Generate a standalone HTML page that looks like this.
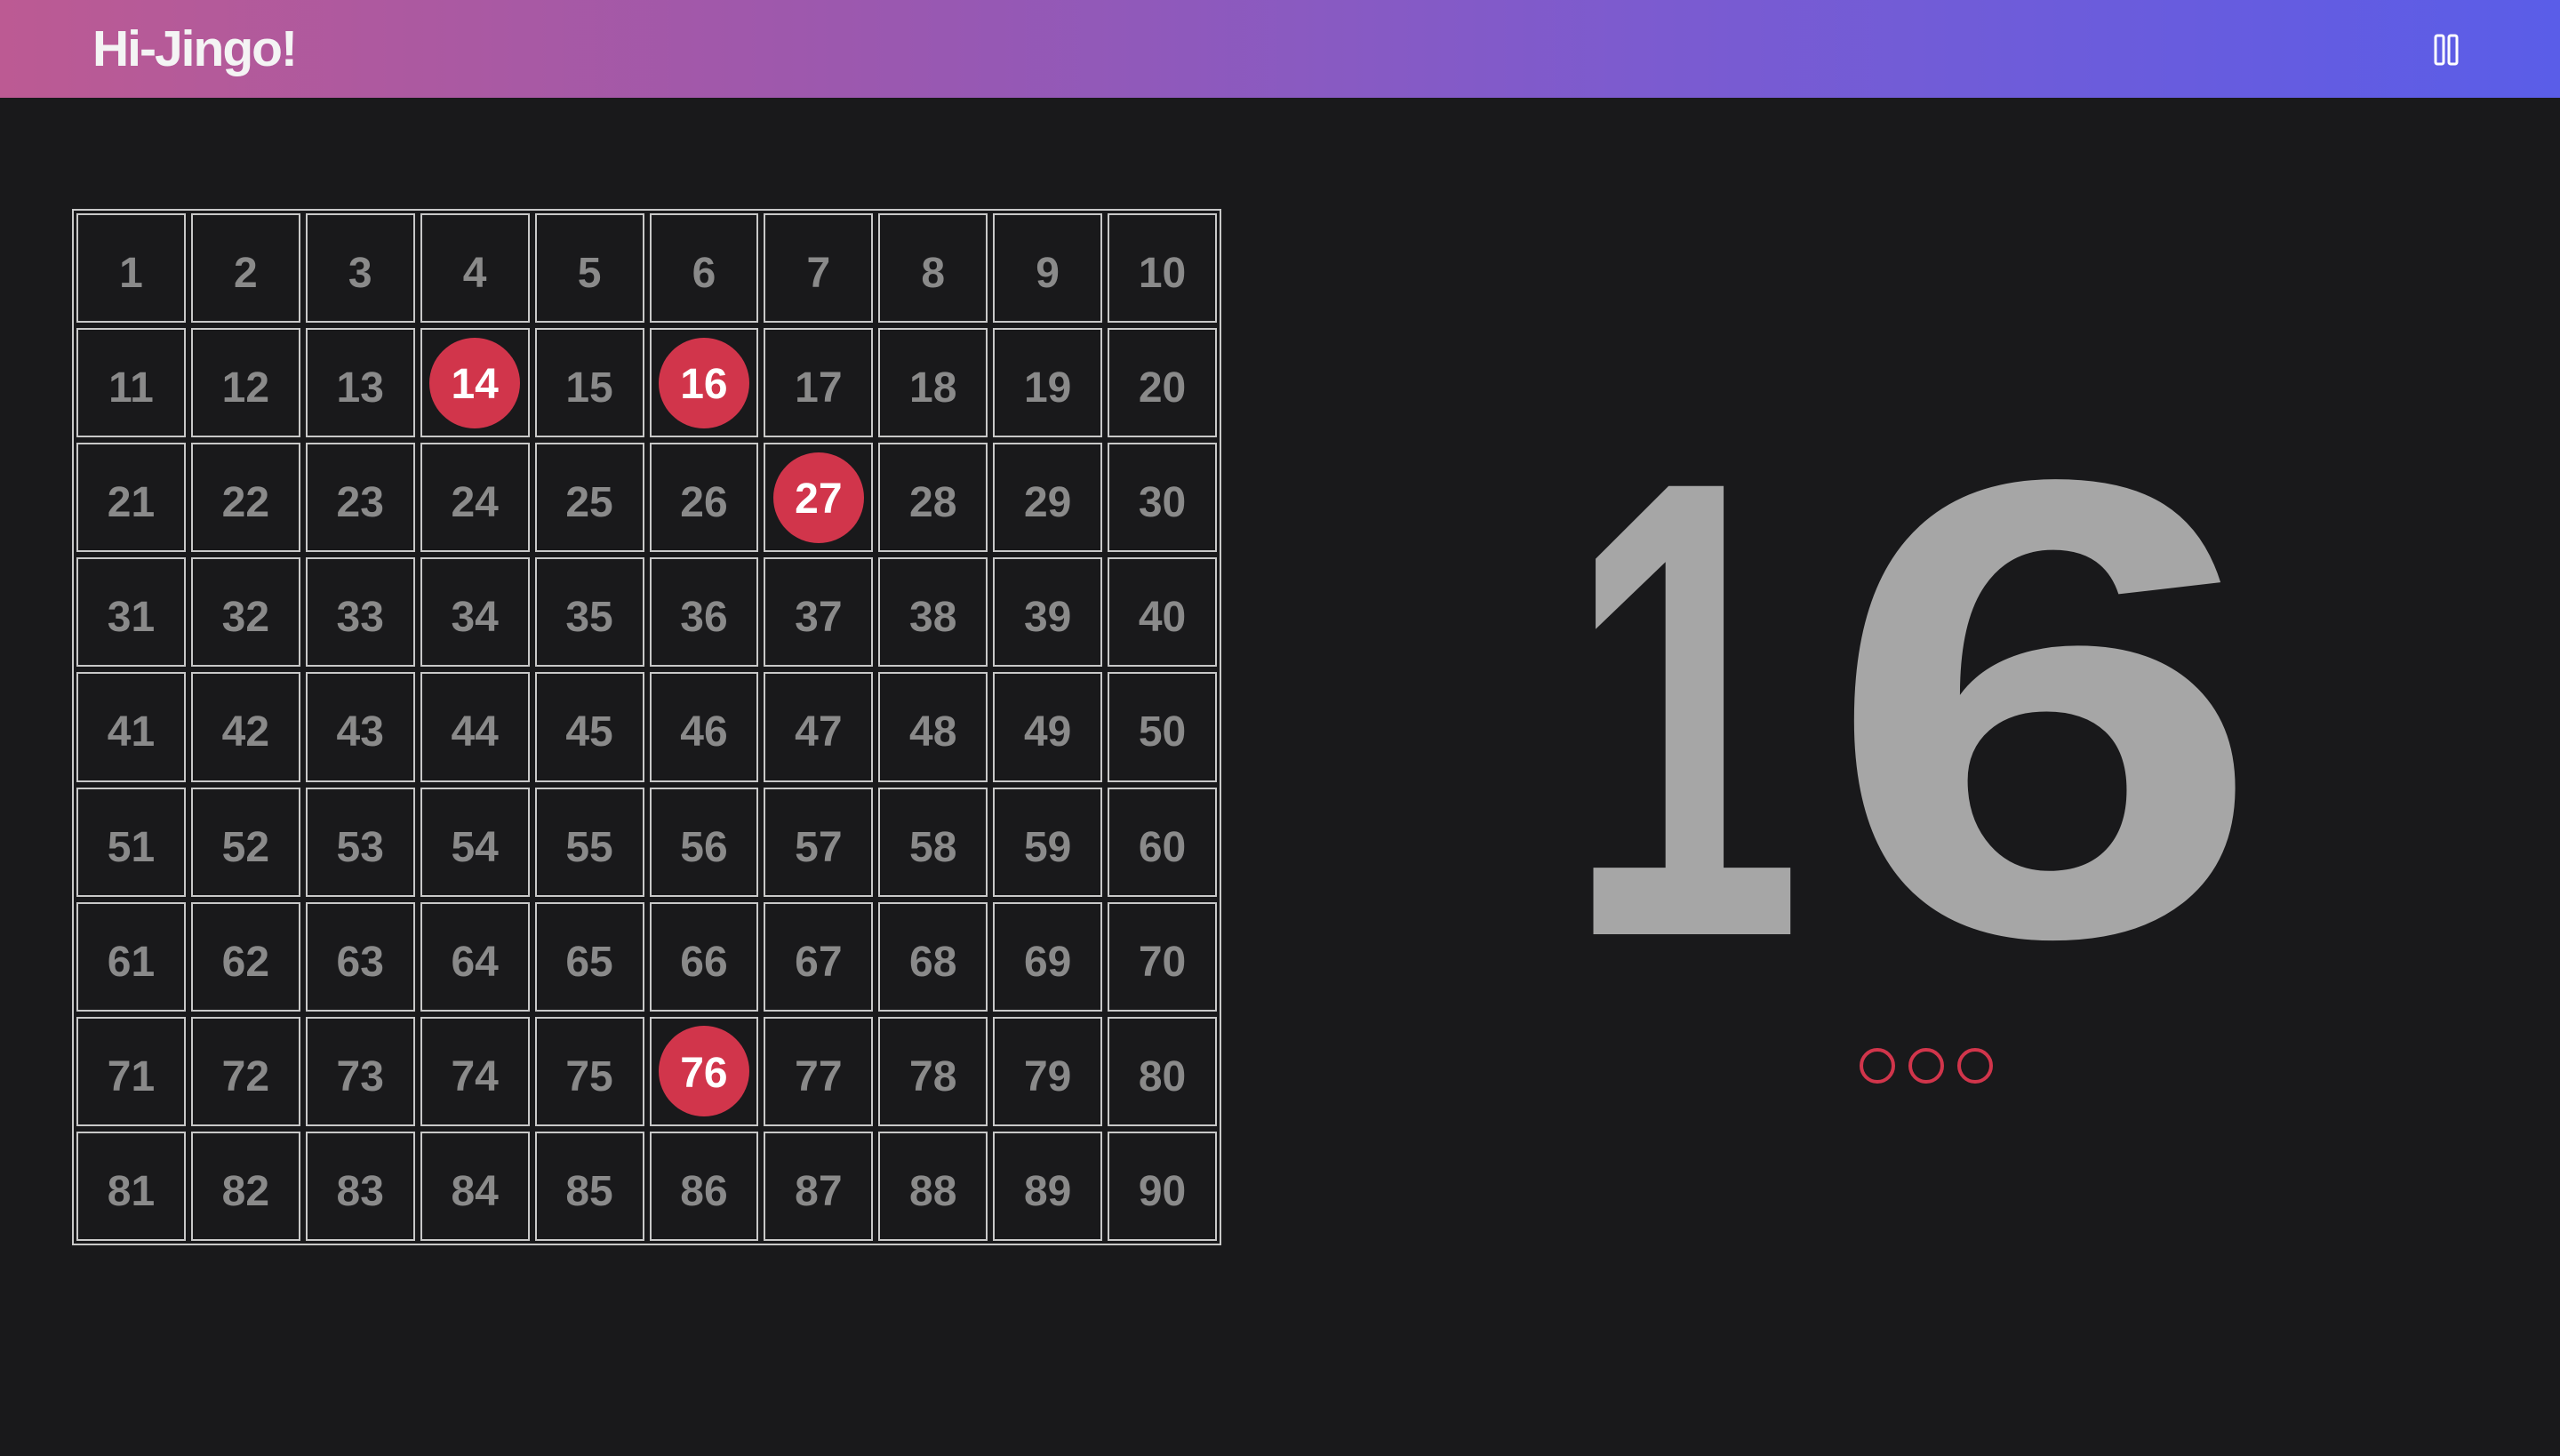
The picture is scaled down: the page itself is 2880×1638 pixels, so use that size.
<!DOCTYPE html>
<html><head><meta charset="utf-8"><style>
body{margin:0;width:2880px;height:1638px;background:#19191b;overflow:hidden;font-family:"Liberation Sans",sans-serif;position:relative}
.hd{position:absolute;left:0;top:0;width:2880px;height:110px;background:linear-gradient(90deg,#bc5a93 0%,#9a58b0 35%,#7b5bd0 65%,#5a5de8 100%)}
.hd h1{position:absolute;left:104px;top:22px;margin:0;font-size:57px;font-weight:700;color:#f4f4f4;letter-spacing:-2px}
.pause{position:absolute;left:2738px;top:38px}
.board{position:absolute;left:81px;top:235px;border:2px solid #c8c8c8;padding:3px;display:grid;grid-template-columns:repeat(10,1fr);grid-template-rows:repeat(9,1fr);gap:6px;box-sizing:border-box;width:1293px;height:1166px}
.board div{border:2px solid #c8c8c8;display:flex;align-items:center;justify-content:center;font-size:48px;font-weight:700;color:#8a8a8a;position:relative;padding-top:12px}
.board div.m span{width:102px;height:102px;border-radius:50%;background:#d1354b;color:#fff;display:flex;align-items:center;justify-content:center;margin-top:-12px;padding-top:4px;box-sizing:border-box}
</style></head><body>
<div class="hd"><h1>Hi-Jingo!</h1>
<svg class="pause" width="28" height="36" viewBox="0 0 28 36"><rect x="2" y="2" width="9" height="32" rx="2" fill="none" stroke="#fff" stroke-width="3"/><rect x="17" y="2" width="9" height="32" rx="2" fill="none" stroke="#fff" stroke-width="3"/></svg></div>
<div class="board">
<div>1</div><div>2</div><div>3</div><div>4</div><div>5</div><div>6</div><div>7</div><div>8</div><div>9</div><div>10</div>
<div>11</div><div>12</div><div>13</div><div class="m"><span>14</span></div><div>15</div><div class="m"><span>16</span></div><div>17</div><div>18</div><div>19</div><div>20</div>
<div>21</div><div>22</div><div>23</div><div>24</div><div>25</div><div>26</div><div class="m"><span>27</span></div><div>28</div><div>29</div><div>30</div>
<div>31</div><div>32</div><div>33</div><div>34</div><div>35</div><div>36</div><div>37</div><div>38</div><div>39</div><div>40</div>
<div>41</div><div>42</div><div>43</div><div>44</div><div>45</div><div>46</div><div>47</div><div>48</div><div>49</div><div>50</div>
<div>51</div><div>52</div><div>53</div><div>54</div><div>55</div><div>56</div><div>57</div><div>58</div><div>59</div><div>60</div>
<div>61</div><div>62</div><div>63</div><div>64</div><div>65</div><div>66</div><div>67</div><div>68</div><div>69</div><div>70</div>
<div>71</div><div>72</div><div>73</div><div>74</div><div>75</div><div class="m"><span>76</span></div><div>77</div><div>78</div><div>79</div><div>80</div>
<div>81</div><div>82</div><div>83</div><div>84</div><div>85</div><div>86</div><div>87</div><div>88</div><div>89</div><div>90</div>
</div>
<svg style="position:absolute;left:0;top:0" width="2880" height="1638">
<g transform="translate(1895,0) scale(0.65,1)"><text x="0" y="1051" text-anchor="middle" font-family="Liberation Sans" font-weight="700" font-size="733" fill="#a6a6a6">1</text></g>
<g transform="translate(2300,0) scale(1.21,1)"><text x="0" y="1051" text-anchor="middle" font-family="Liberation Sans" font-weight="700" font-size="733" fill="#a6a6a6">6</text></g>
<circle cx="2112" cy="1199" r="18" fill="none" stroke="#d1354b" stroke-width="4"/>
<circle cx="2167" cy="1199" r="18" fill="none" stroke="#d1354b" stroke-width="4"/>
<circle cx="2222" cy="1199" r="18" fill="none" stroke="#d1354b" stroke-width="4"/>
</svg>
</body></html>
